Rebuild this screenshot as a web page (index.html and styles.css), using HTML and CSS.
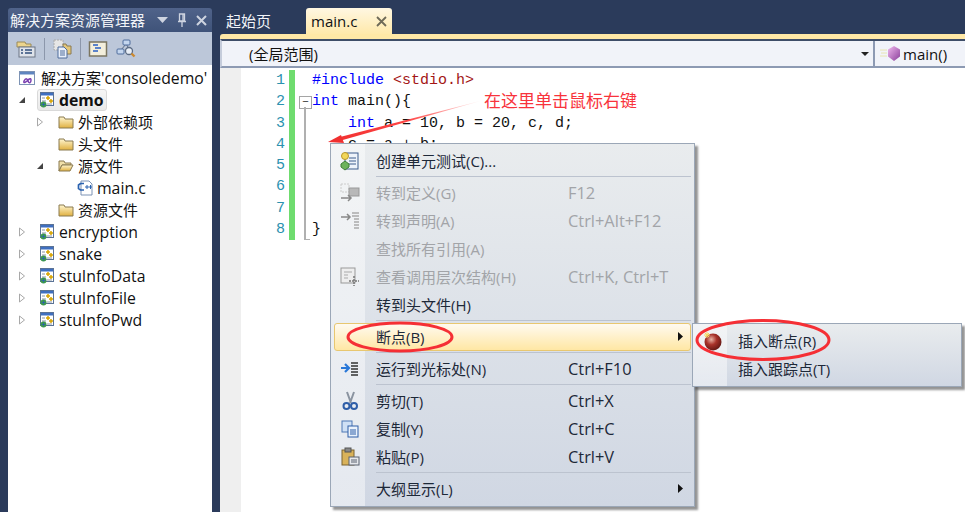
FILE: index.html
```html
<!DOCTYPE html>
<html lang="zh-CN">
<head>
<meta charset="utf-8">
<title>VS2010</title>
<link rel="stylesheet" href="styles.css">
</head>
<body>
<svg class="defs" width="0" height="0" aria-hidden="true">
  <defs>
    <linearGradient id="fold" x1="0" y1="0" x2="0" y2="1"><stop offset="0" stop-color="#fff6d0"/><stop offset="1" stop-color="#e0b040"/></linearGradient>
    <radialGradient id="ball" cx=".4" cy=".35" r=".7"><stop offset="0" stop-color="#e9b3a5"/><stop offset=".45" stop-color="#a8322a"/><stop offset="1" stop-color="#5d1512"/></radialGradient>
    <linearGradient id="gem" x1="0" y1="0" x2="1" y2="1"><stop offset="0" stop-color="#f0b8ee"/><stop offset="1" stop-color="#8a3f9a"/></linearGradient>
    <symbol id="i-folder" viewBox="0 0 16 16"><path d="M1 3h5l1 2h8v9H1z" fill="url(#fold)" stroke="#8a7a50"/></symbol>
    <symbol id="i-open" viewBox="0 0 16 16"><path d="M1 3h5l1 2h6v2H4L1 13z" fill="#f0dfa8" stroke="#8a7a50"/><path d="M4 7h11l-3 6H1z" fill="url(#fold)" stroke="#8a7a50"/></symbol>
    <symbol id="i-project" viewBox="0 0 16 16"><rect x="1.500" y=".5" width="13" height="13" fill="#fff" stroke="#5b7396"/><rect x="2" y="1" width="12" height="2.500" fill="#3f6fc0"/><path d="M7 6h4M9 4v4M10 9h4M12 7v4" stroke="#d8a400" stroke-width="1.500"/><path d="M3 6h3M3 9h4M8 12h5" stroke="#8895a8"/><circle cx="4.500" cy="12.500" r="3" fill="#3f9a4a"/><path d="M2.500 12.500h4M4.500 10.500v4" stroke="#2a62b0" stroke-width=".8"/></symbol>
    <symbol id="i-arrow-open" viewBox="0 0 8 8"><path d="M7 1v6H1z" fill="#444"/></symbol>
    <symbol id="i-arrow-closed" viewBox="0 0 8 10"><path d="M1.500 1l5 4-5 4z" fill="#fff" stroke="#a8a8a8"/></symbol>
  </defs>
</svg>

<div class="ide">
  <aside class="panel">
    <header class="panel-head">
      <span class="panel-title">解决方案资源管理器</span>
      <span class="panel-tools">
        <svg class="ht" viewBox="0 0 11 6" width="11" height="6"><path d="M0 0h11L5.500 6z" fill="#ced4e0"/></svg>
        <svg class="ht" viewBox="0 0 10 14" width="10" height="14"><path d="M2.500 1h5v7h-5zM1 8.500h8M5 9v5M6 1.500v6" stroke="#ced4e0" stroke-width="1.300" fill="none"/></svg>
        <svg class="ht" viewBox="0 0 11 11" width="11" height="11"><path d="M1 1l9 9M10 1l-9 9" stroke="#ced4e0" stroke-width="2"/></svg>
      </span>
    </header>
    <div class="panel-bar">
      <svg class="tb" viewBox="0 0 20 20"><path d="M1 3h8l1 2h5v3H1z" fill="#ecd48c" stroke="#9a8a58"/><rect x="3" y="8" width="16" height="10" fill="#dfe3ea" stroke="#6d7686"/><path d="M5 11h2M9 11h7M5 14h2M9 14h7" stroke="#33507c" stroke-width="1.300"/></svg>
      <i class="tb-sep"></i>
      <svg class="tb" viewBox="0 0 20 20"><rect x="2" y="1" width="9" height="10" fill="#e6e6e6" stroke="#aaa" stroke-dasharray="2 1"/><path d="M11 5h3l1 2h4v8h-8z" fill="#e3c67a" stroke="#8a7a50"/><path d="M6 8h6l3 3v8H6z" fill="#eaf0fa" stroke="#4e6c9c"/><path d="M8 12h5M8 14h5M8 16h5" stroke="#4e6c9c"/></svg>
      <i class="tb-sep"></i>
      <svg class="tb" viewBox="0 0 20 20"><rect x="1.500" y="3" width="17" height="14" fill="#f3efdc" stroke="#7b7660" stroke-width="1.500"/><path d="M5 6h5M7 9h6M5 12h5" stroke="#2a60c4" stroke-width="1.500"/></svg>
      <svg class="tb tb-last" viewBox="0 0 20 20"><path d="M10 5L5 11M10 5l4 6" stroke="#5c6c84"/><rect x="7" y="1" width="7" height="5" rx="1" fill="#c4d6ee" stroke="#4e6c9c"/><rect x="1" y="10" width="7" height="5" rx="1" fill="#c4d6ee" stroke="#4e6c9c"/><circle cx="13" cy="12" r="3.500" fill="#e8eef6" stroke="#5c6c84" stroke-width="1.300"/><path d="M15.500 14.500l3 3" stroke="#cc8a30" stroke-width="2.400"/></svg>
    </div>
    <ul class="tree">
      <li class="row lv0"><svg class="ico sol" viewBox="0 0 16 16"><rect x=".5" y="1.500" width="15" height="13" fill="#fff" stroke="#7d93b5"/><rect x="1" y="2" width="14" height="2.500" fill="#5f85c0"/><path d="M5 11c1.500-3 3-3 4 0s3 2 3-1-3 0-4 1-4 3-3 0z" fill="none" stroke="#7a3fb0" stroke-width="1.500"/></svg><span>解决方案<span class="lat">'consoledemo'</span></span></li>
      <li class="row lv1"><svg class="tw" viewBox="0 0 8 8"><use href="#i-arrow-open"/></svg><span class="selected"><svg class="ico"><use href="#i-project"/></svg><b class="lat">demo</b></span></li>
      <li class="row lv2"><svg class="tw"><use href="#i-arrow-closed"/></svg><svg class="ico"><use href="#i-folder"/></svg><span>外部依赖项</span></li>
      <li class="row lv2"><i class="tw"></i><svg class="ico"><use href="#i-folder"/></svg><span>头文件</span></li>
      <li class="row lv2"><svg class="tw"><use href="#i-arrow-open"/></svg><svg class="ico"><use href="#i-open"/></svg><span>源文件</span></li>
      <li class="row lv3"><svg class="ico" viewBox="0 0 16 16"><path d="M4 1h8l3 3v11H4z" fill="#fff" stroke="#7d93b5"/><path d="M7 3.500H3.500L1.500 5v3.500l2 1.500H7" fill="none" stroke="#2a62b0" stroke-width="1.700"/><path d="M8 7h4M10 5v4M12 7h3M13.500 5v4" stroke="#2a62b0"/></svg><span class="lat">main.c</span></li>
      <li class="row lv2"><i class="tw"></i><svg class="ico"><use href="#i-folder"/></svg><span>资源文件</span></li>
      <li class="row lv1"><svg class="tw"><use href="#i-arrow-closed"/></svg><svg class="ico"><use href="#i-project"/></svg><span class="lat">encryption</span></li>
      <li class="row lv1"><svg class="tw"><use href="#i-arrow-closed"/></svg><svg class="ico"><use href="#i-project"/></svg><span class="lat">snake</span></li>
      <li class="row lv1"><svg class="tw"><use href="#i-arrow-closed"/></svg><svg class="ico"><use href="#i-project"/></svg><span class="lat">stuInfoData</span></li>
      <li class="row lv1"><svg class="tw"><use href="#i-arrow-closed"/></svg><svg class="ico"><use href="#i-project"/></svg><span class="lat">stuInfoFile</span></li>
      <li class="row lv1"><svg class="tw"><use href="#i-arrow-closed"/></svg><svg class="ico"><use href="#i-project"/></svg><span class="lat">stuInfoPwd</span></li>
    </ul>
  </aside>

  <main class="doc">
    <div class="tabs">
      <span class="tab">起始页</span>
      <span class="tab active"><span>main.c</span><svg viewBox="0 0 11 11" width="11" height="11"><path d="M1 1l9 9M10 1l-9 9" stroke="#6f6a58" stroke-width="1.800"/></svg></span>
    </div>
    <div class="tab-rule"></div>
    <div class="nav">
      <div class="nav-left"><span>(全局范围)</span><svg viewBox="0 0 8 4" width="8" height="4"><path d="M0 0h8L4 4z" fill="#222"/></svg></div>
      <div class="nav-right">
        <svg viewBox="0 0 20 15" width="20" height="15"><path d="M0 4h7M1 7h6M0 10h7" stroke="#e8e4b0"/><path d="M14 0l6 3.500v7L14 15l-6-4.500v-7z" fill="url(#gem)"/></svg>
        <span>main()</span>
      </div>
    </div>
    <div class="editor">
      <div class="margin"></div>
      <div class="code">
        <div class="ln"><span class="num">1</span><i class="chg"></i><i class="fold"></i><code><span class="pp">#include</span> <span class="str">&lt;stdio.h&gt;</span></code></div>
        <div class="ln"><span class="num">2</span><i class="chg"></i><i class="fold start"></i><code><span class="kw">int</span> main(){</code></div>
        <div class="ln"><span class="num">3</span><i class="chg"></i><i class="fold mid"></i><code>    <span class="kw">int</span> a = 10, b = 20, c, d;</code></div>
        <div class="ln"><span class="num">4</span><i class="chg"></i><i class="fold mid"></i><code>    c = a + b;</code></div>
        <div class="ln"><span class="num">5</span><i class="chg"></i><i class="fold mid"></i><code></code></div>
        <div class="ln"><span class="num">6</span><i class="chg"></i><i class="fold mid"></i><code></code></div>
        <div class="ln"><span class="num">7</span><i class="chg"></i><i class="fold mid"></i><code></code></div>
        <div class="ln"><span class="num">8</span><i class="chg"></i><i class="fold end"></i><code>}</code></div>
      </div>
    </div>
  </main>
</div>

<div class="menu main-menu">
  <div class="mi"><svg class="mico" viewBox="0 0 20 20"><rect x="5" y="2" width="13" height="16" fill="#eef3fa" stroke="#3d5c8c"/><path d="M9 7h7M9 10h7M9 13h7" stroke="#3d5c8c"/><circle cx="5" cy="5" r="3.500" fill="#f2d75a" stroke="#b9982a"/><path d="M5 10l4 3v3l-4 3-4-3v-3z" fill="#6cb35c" stroke="#3f7f3a"/></svg><span class="lb">创建单元测试(C)...</span></div>
  <div class="ms"></div>
  <div class="mi off"><svg class="mico" viewBox="0 0 20 20"><rect x="1" y="1" width="8" height="8" fill="none" stroke="#ccc" stroke-dasharray="2 1"/><rect x="9" y="5" width="10" height="8" fill="#b8b8b8" stroke="#999"/><path d="M1 15h10M8 12l3 3-3 3" stroke="#888" stroke-width="1.500" fill="none"/></svg><span class="lb">转到定义(G)</span><span class="sc">F12</span></div>
  <div class="mi off"><svg class="mico" viewBox="0 0 20 20"><path d="M1 6h9M7 3l3 3-3 3" stroke="#888" stroke-width="1.500" fill="none"/><path d="M12 2h7M12 5h7M14 8h5M14 11h5M14 14h5M14 17h5" stroke="#aaa" stroke-width="1.300"/></svg><span class="lb">转到声明(A)</span><span class="sc">Ctrl+Alt+F12</span></div>
  <div class="mi off"><span class="mico"></span><span class="lb">查找所有引用(A)</span></div>
  <div class="mi off"><svg class="mico" viewBox="0 0 20 20"><rect x="1" y="1" width="14" height="15" fill="#eee" stroke="#999"/><path d="M4 5h8M4 8h4M4 11h4" stroke="#aaa"/><path d="M14 9v10M9 14h10" stroke="#777" stroke-width="1.500" stroke-dasharray="2 1"/></svg><span class="lb">查看调用层次结构(H)</span><span class="sc">Ctrl+K, Ctrl+T</span></div>
  <div class="mi"><span class="mico"></span><span class="lb">转到头文件(H)</span></div>
  <div class="ms"></div>
  <div class="mi hot"><span class="mico"></span><span class="lb">断点(B)</span><svg class="sub" viewBox="0 0 5 9" width="5" height="9"><path d="M0 0l5 4.500L0 9z" fill="#111"/></svg></div>
  <div class="ms"></div>
  <div class="mi"><svg class="mico" viewBox="0 0 20 20"><path d="M1 9h7M5 5l4 4-4 4" stroke="#2a78d8" stroke-width="2.200" fill="none"/><path d="M11 4h7M11 7h7M11 10h7M11 13h7M11 16h7" stroke="#333" stroke-width="1.300"/></svg><span class="lb">运行到光标处(N)</span><span class="sc">Ctrl+F10</span></div>
  <div class="ms"></div>
  <div class="mi"><svg class="mico" viewBox="0 0 20 20"><path d="M7 1l4 11M14 1l-4 11" stroke="#8a93a0" stroke-width="2"/><circle cx="6.500" cy="15" r="3" fill="none" stroke="#2f5ea8" stroke-width="2"/><circle cx="14" cy="15" r="3" fill="none" stroke="#2f5ea8" stroke-width="2"/></svg><span class="lb">剪切(T)</span><span class="sc">Ctrl+X</span></div>
  <div class="mi"><svg class="mico" viewBox="0 0 20 20"><rect x="2" y="2" width="10" height="11" fill="#cfe0f5" stroke="#4e78b5"/><rect x="8" y="7" width="10" height="11" fill="#eaf2fc" stroke="#2f5ea8"/><path d="M10 11h6M10 13h6M10 15h6" stroke="#2f5ea8"/></svg><span class="lb">复制(Y)</span><span class="sc">Ctrl+C</span></div>
  <div class="mi"><svg class="mico" viewBox="0 0 20 20"><rect x="2" y="3" width="12" height="15" fill="#d9b25a" stroke="#7a6230"/><rect x="5" y="1" width="6" height="4" fill="#888" stroke="#555"/><rect x="9" y="10" width="10" height="8" fill="#e6e8ec" stroke="#5a6270"/><path d="M11 13h6M11 15h6" stroke="#5a6270"/></svg><span class="lb">粘贴(P)</span><span class="sc">Ctrl+V</span></div>
  <div class="ms"></div>
  <div class="mi"><span class="mico"></span><span class="lb">大纲显示(L)</span><svg class="sub" viewBox="0 0 5 9" width="5" height="9"><path d="M0 0l5 4.500L0 9z" fill="#111"/></svg></div>
</div>

<div class="menu sub-menu">
  <div class="mi"><svg class="mico" viewBox="0 0 20 20"><circle cx="11" cy="11" r="8.500" fill="url(#ball)"/><path d="M5 1v6M2 4h6M3 2l4 4M7 2L3 6" stroke="#f5d860"/></svg><span class="lb">插入断点(R)</span></div>
  <div class="mi"><span class="mico"></span><span class="lb">插入跟踪点(T)</span></div>
</div>

<svg class="marks" viewBox="0 0 965 512" width="965" height="512" aria-hidden="true">
  <defs><linearGradient id="fade" gradientUnits="userSpaceOnUse" x1="484" y1="100" x2="332" y2="142"><stop offset="0" stop-color="#ff3b3b" stop-opacity="0"/><stop offset=".5" stop-color="#f44" /><stop offset="1" stop-color="#f03030"/></linearGradient></defs>
  <path d="M484 100L340 137l1 3.500z" fill="url(#fade)"/>
  <path d="M328 142l13-7 3 8z" fill="#f03030"/>
  <ellipse cx="400" cy="337" rx="52" ry="14" class="ring"/>
  <ellipse cx="763" cy="340" rx="66" ry="19.500" class="ring"/>
</svg>
<span class="note">在这里单击鼠标右键</span>
</body>
</html>
```
FILE: styles.css
```css
* { box-sizing: border-box; }
html, body { margin: 0; padding: 0; height: 100%; overflow: hidden; }
body {
  width: 965px; height: 512px; position: relative;
  background: #2b3b5b;
  font: 15px/22px "Open Sans", "Noto Sans CJK SC", sans-serif;
  color: #111;
}
.defs { position: absolute; }
.ide { display: flex; gap: 8px; height: 512px; padding: 8px 0 0 8px; }

/* left panel */
.panel { width: 204px; display: flex; flex-direction: column; flex: none; }
.panel-head {
  height: 24px; display: flex; align-items: center; justify-content: space-between;
  padding: 0 5px 0 2px; color: #fff; font-size: 15px;
  background: linear-gradient(#50638a, #3f5379); border-radius: 3px 3px 0 0;
}
.panel-title { white-space: nowrap; color: #f2f4f8; }
.panel-tools { display: flex; align-items: center; gap: 9px; }
.ht { display: block; }
.panel-bar {
  height: 33px; background: #bcc7d9; display: flex; align-items: center; padding-left: 8px;
}
.tb { width: 20px; height: 20px; display: block; }
.tb-sep { width: 1px; height: 22px; background: #8c97ab; margin: 0 7px 0 8px; }
.tb-last { margin-left: 8px; }
.tree { list-style: none; margin: 0; padding: 2px 0 0; background: #fff; flex: 1; }
.row { height: 22px; display: flex; align-items: center; white-space: nowrap; }
.lat { font-size: 15.8px; }
.lv0 { padding-left: 11px; }
.lv1 { padding-left: 10px; }
.lv2 { padding-left: 28px; }
.lv3 { padding-left: 69px; }
.tw { display: block; width: 8px; height: 10px; margin-right: 13px; flex: none; }
.lv2 .tw { margin-right: 14px; }
.ico { width: 16px; height: 16px; flex: none; margin-right: 4px; display: block; }
.lv1 .ico { margin-right: 4px; }
.lv0 .ico { margin-right: 6px; }
.lv3 .ico { margin-right: 4px; }
.selected {
  display: inline-flex; align-items: center; height: 22px; padding: 0 2px 0 1px; margin-left: -2px;
  background: linear-gradient(#f6f6f6, #e9e9e9); border: 1px solid #d9d9d9; border-radius: 3px;
}
.selected .ico { margin-right: 4px; }
.selected b { font-weight: 700; }

/* document */
.doc { flex: 1; min-width: 0; display: flex; flex-direction: column; }
.tabs { height: 26px; display: flex; align-items: stretch; }
.tab { width: 86px; display: flex; align-items: center; padding-left: 6px; color: #f2f4f8; font-size: 15px; }
.tab.active {
  gap: 19px; padding-left: 5px; color: #111; font-size: 15px;
  background: linear-gradient(#fff7e2, #ffe9aa); border-radius: 3px 3px 0 0;
}
.tab-rule { height: 5px; background: #ffe8a6; border-radius: 3px 0 0 0; border-bottom: 1px solid #ffe8a6; }
.nav {
  height: 29px; display: flex; background: #f1f3f9;
  border-top: 2px solid #3e4d68; border-bottom: 2px solid #8d9ab3; border-left: 2px solid #c5ccdb;
}
.nav-left { flex: 1; display: flex; align-items: center; justify-content: space-between; padding: 0 4px 0 27px; }
.nav-right {
  width: 92px; flex: none; display: flex; align-items: center; gap: 3px; padding-left: 5px;
  border-left: 2px solid #8d9ab3;
}
.editor { flex: 1; display: flex; background: #fff; }
.margin { width: 21px; background: #efefef; flex: none; }
.code { flex: 1; padding-top: 2px; }
.ln { display: flex; height: 21.3px; line-height: 21.3px; }
.num {
  width: 44px; text-align: right; color: #2b91af; flex: none;
  font: 15px/21.3px "Liberation Mono", monospace;
}
.chg { width: 6px; margin-left: 4px; background: #6fdc6f; flex: none; }
.fold { width: 17px; flex: none; position: relative; }
.fold.mid::before, .fold.end::before, .fold.start::after {
  content: ""; position: absolute; left: 9px; width: 2px; background: #b0b0b0; top: 0; bottom: 0;
}
.fold.start::before {
  content: "−"; position: absolute; left: 4px; top: 5px; width: 11px; height: 11px;
  border: 1px solid #a5a5a5; background: #fff; color: #333;
  font: 11px/9px "Liberation Sans", sans-serif; text-align: center;
}
.fold.start::after { top: 16px; }
.fold.end::after { content: ""; position: absolute; left: 9px; width: 6px; height: 1px; background: #b0b0b0; bottom: 0; }
code { font: 15px/21.3px "Liberation Mono", monospace; white-space: pre; color: #111; }
.kw, .pp { color: #0000ff; }
.str { color: #a31515; }

/* menus */
.menu {
  position: absolute; border: 1px solid #9ba7b7;
  background:
    linear-gradient(90deg, rgba(255,255,255,.45) 34px, transparent 34px),
    linear-gradient(#e9ecee, #d0d7e3);
  box-shadow: 3px 3px 2px rgba(60,60,60,.55);
  padding: 3px;
}
.main-menu { left: 330px; top: 143px; width: 365px; height: 364px; }
.sub-menu { left: 692px; top: 323px; width: 270px; height: 64px; padding: 3px 3px; z-index: 2; }
.mi { height: 28px; display: flex; align-items: center; color: #1d2838; white-space: nowrap; position: relative; }
.mi.off { color: #a2a4a8; }
.mico { width: 20px; height: 20px; margin: 0 16px 0 6px; flex: none; display: block; }
.lb { width: 192px; flex: none; }
.sc { flex: none; font-size: 16.4px; }
.sub { position: absolute; right: 8px; top: 9px; }
.ms { height: 4px; margin-left: 42px; position: relative; }
.ms::before { content: ""; position: absolute; left: 0; right: 0; top: 1px; height: 1px; background: #bcc3cf; }
.hot {
  background: linear-gradient(#fffaf0, #ffe7a4);
  border: 1px solid #e8c770; border-radius: 3px;
}
.hot .mico { margin-left: 5px; }
.hot .sub { top: 8px; right: 7px; }
.marks { position: absolute; left: 0; top: 0; z-index: 3; pointer-events: none; }
.ring { fill: none; stroke: #f52f35; stroke-width: 3; }
.note {
  position: absolute; left: 484px; top: 90px; z-index: 3; color: #f8333c;
  font: 17px/20px "Noto Sans CJK SC", sans-serif; white-space: nowrap;
}
```
